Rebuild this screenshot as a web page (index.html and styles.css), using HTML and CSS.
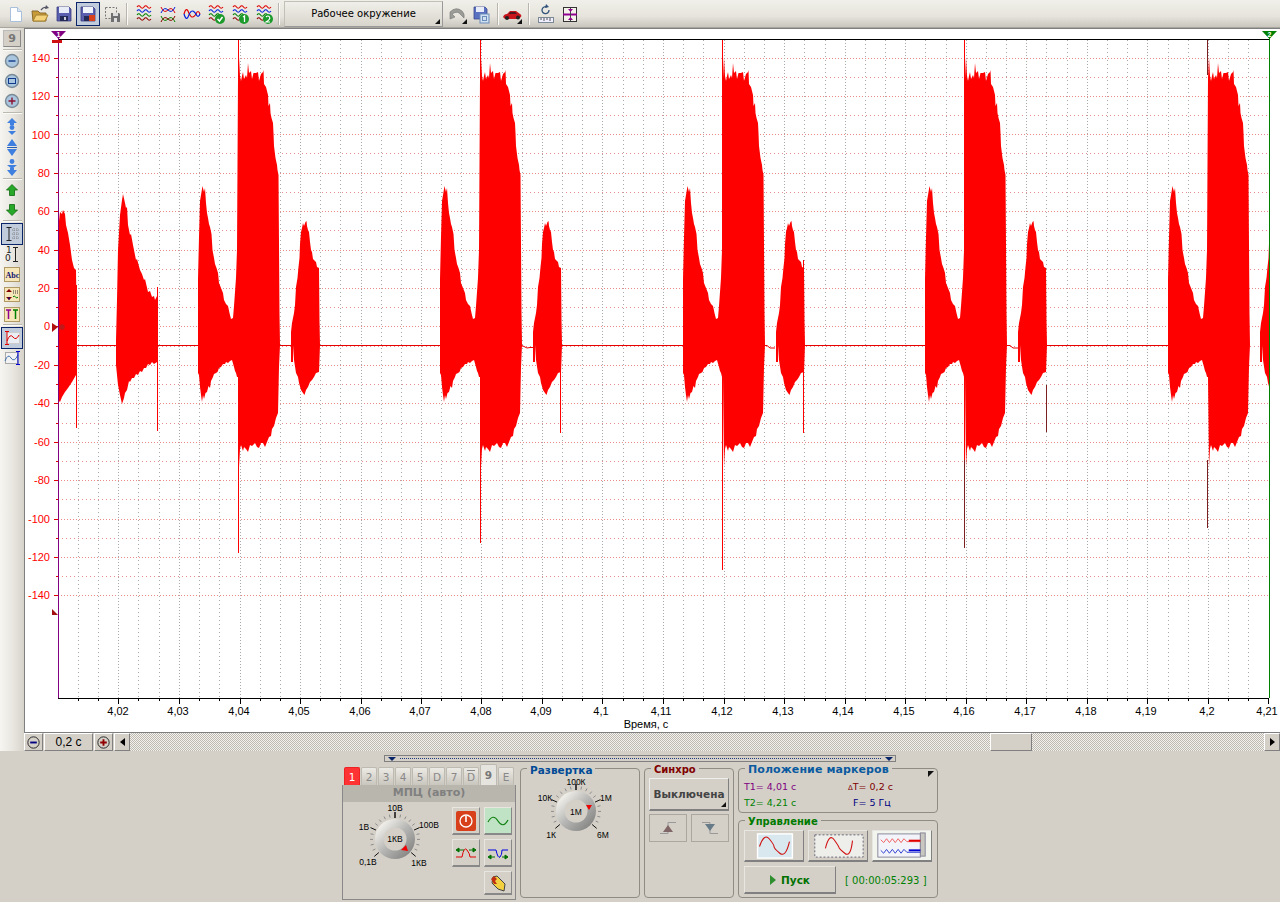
FILE: index.html
```html
<!DOCTYPE html>
<html lang="ru">
<head>
<meta charset="utf-8">
<title>Осциллограф</title>
<link rel="stylesheet" href="styles.css">
</head>
<body>
<div class="app">
  <header class="toolbar">
    <button class="tb"><svg viewBox="0 0 24 24"><path d="M6.500 5.500h7l4 4v10h-11z" fill="#fff" stroke="#a9c0dc"/><path d="M13.500 5.500v4h4" fill="#dbe7f3" stroke="#a9c0dc"/></svg></button>
    <button class="tb"><svg viewBox="0 0 24 24"><path d="M4 9h6l2 2h6v8H5z" fill="#c79a3a" stroke="#8a6a2a"/><path d="M5 19l3-6h12l-3 6z" fill="#f3d27a" stroke="#a5812f"/><path d="M13 8q3-4 6-2" fill="none" stroke="#556" stroke-width="1.300"/><path d="M18 3l3 3-4 1z" fill="#556"/></svg></button>
    <button class="tb"><svg viewBox="0 0 24 24"><path d="M5 5h12l2 2v12H5z" fill="#5a5fb0" stroke="#3a3d80" stroke-width=".8"/><rect x="7" y="5" width="10" height="6" fill="#e8ecf8"/><rect x="8" y="14" width="8" height="5" fill="#222a55"/><rect x="12" y="15" width="2" height="3" fill="#ccd"/></svg></button>
    <button class="tb active"><svg viewBox="0 0 24 24"><path d="M5 5h12l2 2v12H5z" fill="#5a5fb0" stroke="#3a3d80" stroke-width=".8"/><rect x="7" y="5" width="10" height="6" fill="#f2f4fc"/><rect x="8" y="14" width="6" height="5" fill="#222a55"/><rect x="13" y="13" width="6" height="6" fill="#d8401c"/></svg></button>
    <button class="tb"><svg viewBox="0 0 24 24"><rect x="5.500" y="5.500" width="11" height="11" fill="none" stroke="#777" stroke-dasharray="2 1.500"/><path d="M11 11h8l1 1v8H11z" fill="#6f6f6f"/><rect x="13" y="11" width="5" height="3" fill="#ddd"/><rect x="14" y="16" width="3" height="4" fill="#ddd"/></svg></button>
    <span class="tsep first"></span>
    <button class="tb"><svg viewBox="0 0 24 24"><use href="#w1" y="0" stroke="#e00000"/><use href="#w1" y="4" stroke="#0020e0"/><use href="#w1" y="8" stroke="#008000"/><use href="#w1" y="12" stroke="#900000"/></svg></button>
    <button class="tb"><svg viewBox="0 0 24 24"><path d="M5 5q3 7 7 3t7 3" fill="none" stroke="#e00000"/><path d="M5 11q3-7 7-3t7-3" fill="none" stroke="#0020e0"/><path d="M5 14q3 7 7 3t7 3" fill="none" stroke="#008000"/><path d="M5 20q3-7 7-3t7-3" fill="none" stroke="#900000"/></svg></button>
    <button class="tb"><svg viewBox="0 0 24 24"><path d="M4 12q2-7 4-3c2 5 4 9 8 3q2-5 4 0" fill="none" stroke="#e00000" stroke-width="1.200"/><path d="M4 12q2 7 4 3c2-5 4-9 8-3q2 5 4 0" fill="none" stroke="#0020e0" stroke-width="1.200"/></svg></button>
    <button class="tb"><svg viewBox="0 0 24 24"><use href="#w1" y="0" stroke="#e00000"/><use href="#w1" y="4" stroke="#0020e0"/><use href="#w1" y="8" stroke="#008000"/><use href="#w1" y="12" stroke="#900000"/><circle cx="16" cy="17" r="5" fill="#1c9a2c"/><path d="M13.500 17l2 2 3-4" fill="none" stroke="#fff" stroke-width="1.500"/></svg></button>
    <button class="tb"><svg viewBox="0 0 24 24"><use href="#w1" y="0" stroke="#e00000"/><use href="#w1" y="4" stroke="#0020e0"/><use href="#w1" y="8" stroke="#008000"/><use href="#w1" y="12" stroke="#900000"/><circle cx="16" cy="17" r="5" fill="#1c9a2c"/><path d="M15 15l1.500-1v6" fill="none" stroke="#fff" stroke-width="1.300"/></svg></button>
    <button class="tb"><svg viewBox="0 0 24 24"><use href="#w1" y="0" stroke="#e00000"/><use href="#w1" y="4" stroke="#0020e0"/><use href="#w1" y="8" stroke="#008000"/><use href="#w1" y="12" stroke="#900000"/><circle cx="16" cy="17" r="5" fill="#1c9a2c"/><path d="M14 15q2-2 3.500 0t-3.500 5h4" fill="none" stroke="#fff" stroke-width="1.200"/></svg></button>
    <span class="tsep"></span>
    <button class="env">Рабочее окружение<i class="corner"></i></button>
    <button class="tb wide"><svg viewBox="0 0 24 24"><path d="M5 17V10q6-6 12-1 3 3 2 7l-3-3q-3-5-9-1l3 3z" fill="#9c9c98" stroke="#74746f" stroke-width=".6"/></svg><i class="corner"></i></button>
    <button class="tb narrow"><svg viewBox="0 0 24 24"><path d="M5 5h11l2 2v10H5z" fill="#5a70c0" stroke="#3a4a90" stroke-width=".8"/><rect x="7" y="5" width="8" height="5" fill="#e8ecf8"/><rect x="11" y="12" width="9" height="9" fill="#cfe0f2" stroke="#6b8bb8"/><rect x="13.500" y="14.500" width="4" height="4" fill="none" stroke="#6b8bb8"/></svg></button>
    <span class="tsep s2"></span>
    <button class="tb"><svg viewBox="0 0 24 24"><path d="M3 15q1-3 4-3l3-3h6l4 3q2 1 1 3l-3 2H5z" fill="#c8161c"/><path d="M10 10h5l2 2h-8z" fill="#4a1a20"/><circle cx="7" cy="16" r="2" fill="#222"/><circle cx="18" cy="15.500" r="2" fill="#222"/></svg><i class="corner"></i></button>
    <span class="tsep s3"></span>
    <button class="tb small"><svg viewBox="0 0 22 22"><rect x="3.500" y="14.500" width="15" height="5" fill="#eef" stroke="#7c8894"/><path d="M6 15v2M9 15v3M12 15v2M15 15v3" stroke="#555"/><path d="M14 7a3.500 3.500 0 1 1-2-3" fill="none" stroke="#30527a" stroke-width="1.300"/><path d="M11 1l3 3-4 1z" fill="#30527a"/></svg></button>
    <button class="tb small"><svg viewBox="0 0 22 22"><rect x="4.500" y="4.500" width="13" height="14" fill="#f4f2ea" stroke="#333"/><path d="M4 11.500h14" stroke="#900090" stroke-width="2"/><path d="M11.500 5v13" stroke="#444"/><path d="M9 6h5l-2.500 3zM9 17h5l-2.500-3z" fill="#900090"/></svg></button>
  </header>

  <div class="work">
    <aside class="side">
      <button class="nine">9</button>
      <span class="ssep"></span>
      <button class="sb"><svg viewBox="0 0 20 20"><circle cx="10" cy="10" r="6.500" fill="#a9c6de" stroke="#7a8b98" stroke-width="1.400"/><path d="M6.500 10h7" stroke="#123a8c" stroke-width="1.400"/></svg></button>
      <button class="sb"><svg viewBox="0 0 20 20"><circle cx="10" cy="10" r="6.500" fill="#a9c6de" stroke="#7a8b98" stroke-width="1.400"/><rect x="6.500" y="7.500" width="7" height="5" fill="none" stroke="#123a8c"/></svg></button>
      <button class="sb"><svg viewBox="0 0 20 20"><circle cx="10" cy="10" r="6.500" fill="#a9c6de" stroke="#7a8b98" stroke-width="1.400"/><path d="M6.500 10h7M10 6.500v7" stroke="#8c1230" stroke-width="1.400"/></svg></button>
      <span class="ssep tight"></span>
      <button class="sb tall"><svg viewBox="0 0 20 20"><path d="M10 2l5 5h-3v2H8V7H5z" fill="#3f7fe0"/><circle cx="10" cy="11.500" r="2.400" fill="#3f7fe0"/><path d="M6 15h8l-4 4z" fill="#3f7fe0"/></svg></button>
      <button class="sb tall"><svg viewBox="0 0 20 20"><path d="M10 2l5 7H5zM10 19l-5-7h10z" fill="#3f7fe0"/><path d="M5 10.500h10" stroke="#2a5cb0"/></svg></button>
      <button class="sb tall"><svg viewBox="0 0 20 20"><circle cx="10" cy="3.500" r="2.400" fill="#3f7fe0"/><path d="M5 7h10l-5 4zM5 12h3v-2h4v2h3l-5 6z" fill="#3f7fe0"/></svg></button>
      <span class="ssep flat"></span>
      <button class="sb"><svg viewBox="0 0 20 20"><path d="M10 4.500l5.500 5.500h-3v5.500h-5V10h-3z" fill="#28a828" stroke="#106a10" stroke-width=".8"/></svg></button>
      <button class="sb"><svg viewBox="0 0 20 20"><path d="M10 15.500l5.500-5.500h-3V4.500h-5V10h-3z" fill="#28a828" stroke="#106a10" stroke-width=".8"/></svg></button>
      <span class="ssep flat low"></span>
      <button class="sb on"><svg viewBox="0 0 20 20"><path d="M4.500 3.500h5M7 3.500v13M4.500 16.500h5" fill="none" stroke="#222"/><path d="M10 6h7M10 10h7M10 14h7M12 4v12M15 4v12" stroke="#888" stroke-dasharray="1 1"/></svg></button>
      <button class="sb"><svg viewBox="0 0 20 20"><text x="4" y="9" class="ico-t">1</text><text x="3" y="17" class="ico-t">0</text><path d="M11 3.500h5M13.500 3.500v14M11 17.500h5" fill="none" stroke="#222"/></svg></button>
      <button class="sb"><svg viewBox="0 0 20 20"><rect x="2.500" y="3.500" width="15" height="14" fill="#f6e6b8" stroke="#b09a66"/><text x="3.500" y="14" class="ico-b">Abc</text></svg></button>
      <button class="sb"><svg viewBox="0 0 20 20"><rect x="2.500" y="3.500" width="15" height="14" fill="#f6e6b8" stroke="#b09a66"/><path d="M7 5l3 3H4zM7 16l-3-3h6z" fill="#800000"/><path d="M6 13.500l1 3 1-3z" fill="#000080"/><path d="M11 7h5M11 9h5" stroke="#333" stroke-dasharray="1 1"/><path d="M11 13q1-2 2.500 0t2.500 0" stroke="#008000" fill="none"/></svg></button>
      <button class="sb"><svg viewBox="0 0 20 20"><rect x="2.500" y="3.500" width="15" height="14" fill="#f6e6b8" stroke="#b09a66"/><path d="M4 6h5M6.500 6v9" stroke="#900090" stroke-width="1.500"/><path d="M11 6h5M13.500 6v9" stroke="#008000" stroke-width="1.500"/></svg></button>
      <span class="ssep flat gap"></span>
      <button class="sb on"><svg viewBox="0 0 20 20"><rect x="4.500" y="4.500" width="13" height="11" fill="#e8eef4" stroke="#ccc"/><path d="M3 3.500h4M5 3.500v13M3 16.500h4" fill="none" stroke="#e00000"/><path d="M5 13q3-8 6-4t6-2" fill="none" stroke="#e00000"/></svg></button>
      <button class="sb"><svg viewBox="0 0 20 20"><rect x="3.500" y="4.500" width="12" height="11" fill="#f2f2f2" stroke="#aaa"/><path d="M3 13q3-8 6-3t7-3" fill="none" stroke="#4070b0"/><path d="M14 3.500h4M16 3.500v13M14 16.500h4" fill="none" stroke="#0000d0"/></svg></button>
    </aside>

    <main class="main">
      <div class="chart">
        <svg class="plot" viewBox="25 29 1255 703" width="1255" height="703">
          <defs>
            <path id="w1" d="M5 5q1.750-2.500 3.500 0t3.500 0 3.500 0 3.500 0" fill="none" stroke-width="1.100"/>
            <clipPath id="clip-plot"><rect x="58" y="30" width="1211" height="668"/></clipPath>
            <path id="main-burst" d="M440 345V279L441 237 442 201 443.500 192 444.500 186 446 192 447 188 448 203 449 213 450 218 451 224 452 227 453.500 234 454.500 250 456 258 457 264 458.500 268 460 273 461 283 463 288 465 293 466 300 468 304 470 306 471.500 313 473 319 475 318 476 306 477 292 478 278 479 250 480 78 481 57 482 76 483 81 484 76 485 72 486 79 487 77 488 75 489 78 490 63 491 73 493 71 494 79 495.500 73 498 73 500 72 501 81 503 74 505 72 505.500 70 506 84 508 87 509 91 510 95 510.500 106 512 103 512.500 113 513.500 118 515 123 515.500 133 516 146 517.500 158 519 165 519.500 170 520.500 175 521.500 314 522 345 521 367 520 413 518 418 516 426 514 429 513 436 511 437 509 442 507 447 505 443 503 443 501 448 499 447 497 443 494 446 492 445 490 452 488 449 486 447 485 451 483 445 482 449 481 467 480 377 479 377 478 373 477 371 476 367 474 360 472 361 470 363 468 362 467 364 465 364 463 367 461 368 459.500 372 458 373 456 374 455 377 453 381 452 388 450.500 386 449 392 447.500 393 446 399 445 395 444 402 443 395 442 387 441 375 440 373z"/>
            <path id="small-burst" d="M533 345V332L534 323 536 313 537 305 538 287 539.500 278 540.500 267 541.500 258 542 244 543 232 544 228 545 223 546 226 547.500 222 548.500 221 549 226 550 230 551 232 552 242 553 250 554 252 555 259 558 262 559 267 561 268 561.500 321 562 345 561 372 558 373 556 377 554 380 552 382 550 387 548 390 546.500 395 545 393 543 390 541 383 540 377 538 373 536 360 535 345 535 362 533 362z"/>
          </defs>
          <path class="grid-y" d="M58 58.500H1269M58 96.500H1269M58 134.500H1269M58 173.500H1269M58 211.500H1269M58 250.500H1269M58 288.500H1269M58 326.500H1269M58 365.500H1269M58 403.500H1269M58 442.500H1269M58 480.500H1269M58 519.500H1269M58 557.500H1269M58 595.500H1269"/>
          <path class="grid-y minor" d="M58 77.500H1269M58 115.500H1269M58 153.500H1269M58 192.500H1269M58 230.500H1269M58 269.500H1269M58 307.500H1269M58 346.500H1269M58 384.500H1269M58 423.500H1269M58 461.500H1269M58 499.500H1269M58 538.500H1269M58 576.500H1269"/>
          <path class="grid-x" d="M118.500 40V698M179.500 40V698M240.500 40V698M300.500 40V698M361.500 40V698M421.500 40V698M481.500 40V698M542.500 40V698M602.500 40V698M663.500 40V698M724.500 40V698M784.500 40V698M845.500 40V698M905.500 40V698M966.500 40V698M1026.500 40V698M1087.500 40V698M1147.500 40V698M1208.500 40V698"/>
          <path class="grid-x minor" d="M78.500 40V698M98.500 40V698M138.500 40V698M159.500 40V698M199.500 40V698M219.500 40V698M260.500 40V698M280.500 40V698M320.500 40V698M340.500 40V698M381.500 40V698M401.500 40V698M441.500 40V698M461.500 40V698M502.500 40V698M522.500 40V698M562.500 40V698M582.500 40V698M623.500 40V698M643.500 40V698M683.500 40V698M703.500 40V698M744.500 40V698M764.500 40V698M804.500 40V698M825.500 40V698M865.500 40V698M885.500 40V698M925.500 40V698M946.500 40V698M986.500 40V698M1006.500 40V698M1046.500 40V698M1067.500 40V698M1107.500 40V698M1127.500 40V698M1168.500 40V698M1188.500 40V698M1228.500 40V698M1248.500 40V698"/>
          <g clip-path="url(#clip-plot)" class="sig">
            <path class="base" d="M58 345.500H522L524 346.500 527 348 530 347.500H533M562 345.500H683M765 345.500H767L770 348H775M805 345.500H925M1007 345.500H1010L1013 348H1018M1047 345.500H1168"/>
            <path d="M58 400V221L59 221 60 212 62 214 63 210 65 214 66 225 68 233 70 245 72 260 74 268 76 270 77 345 76 375 72 382 68 388 65 392 62 397 60 402z"/>
            <path d="M116 345V340L117 300 118 250 120 215 122 200 123 194 125 203 126 208 127 207 128 225 130 235 131 234 133 245 134 250 136 260 137 259 140 270 142 274 144 280 145 279 148 292 150 291 152 297 154 296 155 300 157 296 158 305V345L157 362 154 364 152 362 150 365 148 364 146 368 144 368 142 372 140 371 138 375 136 374 134 378 132 378 130 382 129 381 127 390 125 393 124 398 122 404 120 395 118 385 116 365z"/>
            <use href="#main-burst" x="-242"/><use href="#main-burst"/><use href="#main-burst" x="243"/><use href="#main-burst" x="485"/><use href="#main-burst" x="728"/>
            <use href="#small-burst" x="-242"/><use href="#small-burst"/><use href="#small-burst" x="243"/><use href="#small-burst" x="485"/><use href="#small-burst" x="727"/>
            <path class="spike" d="M76.500 285V428M157.500 287V431M238.500 40V553M480.500 40V543M560.500 340V433M722.500 40V570M803.500 260V433M964.500 40V460"/>
            <path class="spike dark" d="M964.500 460V548M1046.500 385V432M1207.500 40V75M1207.500 460V528"/>
          </g>
          <path class="axis-b" d="M58 39.500H1269M58 698.500H1269M118.500 698V704M179.500 698V704M240.500 698V704M300.500 698V704M361.500 698V704M421.500 698V704M481.500 698V704M542.500 698V704M602.500 698V704M663.500 698V704M724.500 698V704M784.500 698V704M845.500 698V704M905.500 698V704M966.500 698V704M1026.500 698V704M1087.500 698V704M1147.500 698V704M1208.500 698V704M1268.500 698V704M78.500 698V701M98.500 698V701M138.500 698V701M159.500 698V701M199.500 698V701M219.500 698V701M260.500 698V701M280.500 698V701M320.500 698V701M340.500 698V701M381.500 698V701M401.500 698V701M441.500 698V701M461.500 698V701M502.500 698V701M522.500 698V701M562.500 698V701M582.500 698V701M623.500 698V701M643.500 698V701M683.500 698V701M703.500 698V701M744.500 698V701M764.500 698V701M804.500 698V701M825.500 698V701M865.500 698V701M885.500 698V701M925.500 698V701M946.500 698V701M986.500 698V701M1006.500 698V701M1046.500 698V701M1067.500 698V701M1107.500 698V701M1127.500 698V701M1168.500 698V701M1188.500 698V701M1228.500 698V701M1248.500 698V701"/>
          <path class="axis-r" d="M54 58.500H58M54 96.500H58M54 134.500H58M54 173.500H58M54 211.500H58M54 250.500H58M54 288.500H58M54 326.500H58M54 365.500H58M54 403.500H58M54 442.500H58M54 480.500H58M54 519.500H58M54 557.500H58M54 595.500H58M56 77.500H58M56 115.500H58M56 153.500H58M56 192.500H58M56 230.500H58M56 269.500H58M56 307.500H58M56 346.500H58M56 384.500H58M56 423.500H58M56 461.500H58M56 499.500H58M56 538.500H58M56 576.500H58"/>
          <path class="mk1" d="M58.500 37V698"/>
          <path class="mk2" d="M1269.500 37V698"/>
          <path d="M51 31H66L58.500 39z" fill="#800080"/><path d="M1262 31H1277L1269.500 39z" fill="#008000"/>
          <path d="M52 40h10v3H52z" fill="#d01010"/>
          <path d="M52 323l6 4-6 5z" fill="#b01010"/><circle cx="62" cy="327" r="2.800" fill="#c01818"/>
          <path d="M52 609l6 6h-6z" fill="#a01010"/>
          <text x="58.500" y="37" class="mk-n">1</text><text x="1269.500" y="37" class="mk-n">2</text>
          <g class="yl">
            <text x="50" y="62">140</text><text x="50" y="100">120</text><text x="50" y="139">100</text><text x="50" y="177">80</text><text x="50" y="215">60</text><text x="50" y="254">40</text><text x="50" y="292">20</text><text x="50" y="330">0</text><text x="50" y="369">-20</text><text x="50" y="407">-40</text><text x="50" y="446">-60</text><text x="50" y="484">-80</text><text x="50" y="523">-100</text><text x="50" y="561">-120</text><text x="50" y="599">-140</text>
          </g>
          <g class="xl">
            <text x="118" y="715">4,02</text><text x="178" y="715">4,03</text><text x="239" y="715">4,04</text><text x="299" y="715">4,05</text><text x="360" y="715">4,06</text><text x="420" y="715">4,07</text><text x="481" y="715">4,08</text><text x="541" y="715">4,09</text><text x="601" y="715">4,1</text><text x="661" y="715">4,11</text><text x="722" y="715">4,12</text><text x="783" y="715">4,13</text><text x="843" y="715">4,14</text><text x="904" y="715">4,15</text><text x="964" y="715">4,16</text><text x="1025" y="715">4,17</text><text x="1086" y="715">4,18</text><text x="1146" y="715">4,19</text><text x="1207" y="715">4,2</text><text x="1267" y="715">4,21</text>
            <text x="646" y="728">Время, с</text>
          </g>
        </svg>
      </div>
      <div class="scroll">
        <button class="sc"><svg viewBox="0 0 18 18"><circle cx="9" cy="9" r="6" fill="none" stroke="#222"/><path d="M5.500 9h7" stroke="#000080" stroke-width="2"/></svg></button>
        <button class="sc val">0,2 с</button>
        <button class="sc"><svg viewBox="0 0 18 18"><circle cx="9" cy="9" r="6" fill="none" stroke="#222"/><path d="M5.500 9h7M9 5.500v7" stroke="#900000" stroke-width="2"/></svg></button>
        <button class="sc arr"><i class="tri-l"></i></button>
        <div class="track"><span class="thumb"></span></div>
        <button class="sc arr"><i class="tri-r"></i></button>
      </div>
    </main>
  </div>

  <footer class="bottom">
    <div class="splitter"><i class="tri-d"></i><span class="dots"></span><i class="tri-d"></i></div>
    <div class="panels">
      <section class="channel">
        <div class="tabs">
          <span class="tab act">1</span><span class="tab">2</span><span class="tab">3</span><span class="tab">4</span><span class="tab">5</span><span class="tab">D</span><span class="tab">7</span><span class="tab over">D</span><span class="tab nine-t">9</span><span class="tab">E</span>
        </div>
        <div class="chan-head">МПЦ (авто)</div>
        <div class="chan-body">
          <svg class="knob1" viewBox="344 803 106 70" width="106" height="70">
            <defs>
              <linearGradient id="ring" x1="0" y1="0" x2="1" y2="1"><stop offset=".15" stop-color="#f0efea"/><stop offset=".5" stop-color="#b6b6b4"/><stop offset="1" stop-color="#767674"/></linearGradient>
              <g id="ticks">
                <path d="M4.900-21.400L5.600-24.400M9.600-19.800L11-22.500M13.800-17.100L15.700-19.400M17.300-13.500L19.700-15.400M21.500-4.600L24.500-5.200M22 .4L25 .4M21.300 5.300L24.300 6M19.600 10L22.300 11.300" stroke="#8c8c8c"/>
                <path d="M0-21V-27M19-8.900L24.500-11.400M16.100 13.500L20.700 17.400" stroke="#111"/>
              </g>
              <g id="knob">
                <use href="#ticks"/><use href="#ticks" transform="scale(-1 1)"/>
                <circle r="20" fill="url(#ring)"/><circle r="11.500" fill="#d4d0c8"/>
              </g>
            </defs>
            <use href="#knob" transform="translate(396 839)"/>
            <path d="M402 850l5-5 2 6z" fill="#f00000"/>
            <g class="kl">
              <text x="396" y="811">10В</text><text x="365" y="830">1В</text><text x="430" y="828">100В</text><text x="369" y="865">0,1В</text><text x="420" y="866">1КВ</text><text x="396" y="842">1КВ</text>
            </g>
          </svg>
          <div class="chan-btns">
            <button class="cb"><svg viewBox="0 0 26 26"><rect x="3" y="3" width="20" height="20" rx="2" fill="#d8401c"/><circle cx="13" cy="13" r="6" fill="none" stroke="#fff" stroke-width="1.300"/><path d="M13 8v6" stroke="#fff" stroke-width="1.600"/></svg></button>
            <button class="cb green"><svg viewBox="0 0 26 26"><path d="M3 14q5-9 10-1t10-1" fill="none" stroke="#108010" stroke-width="1.200"/></svg></button>
            <button class="cb"><svg viewBox="0 0 26 26"><path d="M3 17h6q2-11 5-7t3 7h6" fill="none" stroke="#e00000"/><path d="M3 10l3-2v4zM11 10H5M23 10l-3-2v4zM21 10h-5" fill="#007000" stroke="#007000"/></svg></button>
            <button class="cb"><svg viewBox="0 0 26 26"><path d="M3 10h8q2 9 4 7t2-7h6" fill="none" stroke="#0000e0"/><path d="M3 17l3-2v4zM10 17H5M23 17l-3-2v4zM21 17h-4" fill="#007000" stroke="#007000"/></svg></button>
            <button class="cb short slot2"><svg viewBox="0 0 26 22"><path d="M8 5l4-1 8 8-1 7-6-2-6-6z" fill="#f2d040" stroke="#444"/><path d="M6 7l3-3 3 3-2 2 2 3-3 0z" fill="#c03010"/></svg></button>
          </div>
        </div>
      </section>

      <fieldset class="grp sweep">
        <legend class="lg blue">Развертка</legend>
        <svg class="knob2" viewBox="521 775 118 68" width="118" height="68">
          <use href="#knob" transform="translate(576 811)"/>
          <path d="M586 805h6l-3 5z" fill="#f00000"/>
          <g class="kl">
            <text x="576" y="785">100К</text><text x="545" y="801">10К</text><text x="606" y="801">1М</text><text x="551" y="838">1К</text><text x="603" y="838">6М</text><text x="576" y="815">1М</text>
          </g>
        </svg>
      </fieldset>

      <fieldset class="grp sync">
        <legend class="lg maroon">Синхро</legend>
        <button class="off">Выключена<i class="corner"></i></button>
        <div class="sync-row">
          <button class="edge"><svg viewBox="0 0 24 20"><path d="M4 15.500h8V4.500h8" fill="none" stroke="#999"/><path d="M7 14l5-7 5 7z" fill="#806666"/></svg></button>
          <button class="edge"><svg viewBox="0 0 24 20"><path d="M4 4.500h8V15.500h8" fill="none" stroke="#999"/><path d="M7 6l5 7 5-7z" fill="#667a88"/></svg></button>
        </div>
      </fieldset>

      <div class="rcol">
        <fieldset class="grp marks">
          <legend class="lg steel">Положение маркеров</legend>
          <i class="corner top"></i>
          <div class="mrow"><span class="c-pur">T1= 4,01 с</span><span class="c-red dt"><small>Δ</small>T= 0,2 с</span></div>
          <div class="mrow"><span class="c-grn">T2= 4,21 с</span><span class="c-nav f">F= 5 Гц</span></div>
        </fieldset>
        <fieldset class="grp ctrl">
          <legend class="lg green-t">Управление</legend>
          <div class="modes">
            <button class="mode"><svg viewBox="0 0 58 30"><rect x="12" y="3" width="36" height="25" fill="#d8e8ee" stroke="#fff" stroke-width="1.500"/><path d="M14 16q5-14 10-8t5 8 6 7 10-12" fill="none" stroke="#d01010" stroke-width="1.100"/></svg></button>
            <button class="mode"><svg viewBox="0 0 58 30"><rect x="5" y="4" width="50" height="23" fill="#eeeeea" stroke="#667" stroke-dasharray="2 2"/><path d="M16 18q4-16 9-9t5 8 6 6 8-13" fill="none" stroke="#d01010" stroke-width="1.100"/></svg></button>
            <button class="mode lit"><svg viewBox="0 0 58 30"><rect x="4" y="3" width="44" height="24" fill="#f2f4fa" stroke="#889"/><rect x="48" y="2" width="5" height="24" fill="#c8c8c0" stroke="#889"/><path d="M7 9l3 3 3-4 3 4 3-4 3 4 3-4 3 4 3-4 3 3h14" fill="none" stroke="#f06060"/><path d="M36 10h12" stroke="#e00000" stroke-width="2"/><path d="M7 20l3 3 3-4 3 4 3-4 3 4 3-4 3 4 3-4 3 3h14" fill="none" stroke="#3040d0"/><path d="M36 20h12" stroke="#0000d0" stroke-width="2"/></svg></button>
          </div>
          <div class="runrow">
            <button class="run"><i class="tri-g"></i>Пуск</button>
            <span class="timer">[ 00:00:05:293 ]</span>
          </div>
        </fieldset>
      </div>
    </div>
  </footer>
</div>
</body>
</html>
```
FILE: styles.css
```css
* { box-sizing: border-box; }
html, body { margin: 0; height: 100%; background: #d4d0c8; }
body { font-family: "DejaVu Sans", "Liberation Sans", sans-serif; font-size: 11px; color: #000; overflow: hidden; }
button { font: inherit; padding: 0; margin: 0; background: transparent; border: 0; color: inherit; position: relative; }
svg { display: block; }

.app { width: 1280px; height: 902px; display: flex; flex-direction: column; }

/* top toolbar */
.toolbar { height: 28px; flex: none; padding-left: 4px; display: flex; align-items: center; background: linear-gradient(#f0efe9, #e6e4dc 60%, #c9c6be); border-bottom: 1px solid #a8a59e; }
.tb { width: 24px; height: 24px; flex: none; }
.tb svg { width: 24px; height: 24px; }
.tb.active { background: #c0cbdc; outline: 1px solid #0a246a; outline-offset: -1px; }
.tb.wide { margin-left: 2px; }
.tb.small { width: 22px; margin-right: 2px; }
.tb.small svg { width: 22px; height: 22px; margin: 1px 0; }
.tsep { width: 2px; height: 22px; margin: 0 3px 0 2px; background: #fbfaf6; border-left: 1px solid #b8b5ae; flex: none; }
.tsep.first { margin-right: 4px; }
.tsep.s2 { margin: 0 1px 0 4px; }
.tsep.s3 { margin: 0 5px 0 4px; }
.env { width: 159px; height: 26px; margin-left: 1px; margin-right: 0; flex: none; text-align: center; font-size: 10px; background: linear-gradient(#f0efe9, #d8d5cc); border: 1px solid #c2bfb7; border-right-color: #999; border-bottom-color: #999; }
.corner { position: absolute; right: 2px; bottom: 2px; width: 0; height: 0; border-left: 5px solid transparent; border-bottom: 5px solid #111; }
.corner.top { right: 3px; top: -1px; bottom: auto; border-left: 0; border-bottom: 0; border-right: 6px solid transparent; border-top: 6px solid #111; }

/* work area */
.work { flex: none; height: 723px; display: flex; }
.side { width: 24px; flex: none; padding-top: 1px; display: flex; flex-direction: column; align-items: center; background: linear-gradient(90deg, #f6f5f1, #e8e6df 55%, #d6d3cb); }
.nine { width: 18px; height: 17px; flex: none; margin-top: 1px; font-weight: bold; font-size: 11px; color: #777; text-align: center; background: #d4d0c8; border: 1px solid #888; border-top-color: #bbb; border-left-color: #bbb; }
.ssep { width: 19px; height: 2px; flex: none; margin-top: 2px; background: #fafaf6; border-top: 1px solid #bbb8b0; }
.ssep.tight { margin: 1px 0; }
.ssep.flat { margin: 0; }
.ssep.low { margin-bottom: 2px; }
.ssep.gap { margin-bottom: 2px; }
.sb { width: 20px; height: 20px; flex: none; }
.sb svg { width: 20px; height: 20px; }
.sb.tall { height: 21px; }
.sb.on { background: #c0cbdc; outline: 1px solid #0a246a; }
.ico-t { font: 9px "DejaVu Sans", sans-serif; fill: #222; }
.ico-b { font: bold 8px "Liberation Serif", serif; fill: #101070; }

.main { flex: 1; min-width: 0; display: flex; flex-direction: column; }
.chart { height: 705px; flex: none; background: #fff; border-top: 1px solid #7f7f7f; border-left: 1px solid #7f7f7f; border-bottom: 1px solid #7f7f7f; }
.plot { overflow: hidden; }
.grid-y { fill: none; stroke: #ea8a8a; stroke-dasharray: 1 2; stroke-width: 1; }
.grid-y.minor { stroke-dasharray: 1 3; }
.grid-x { fill: none; stroke: #a8a8a8; stroke-dasharray: 1 2; stroke-width: 1; }
.grid-x.minor { stroke-dasharray: 1 3; }
.sig { fill: #ff0000; }
.base { fill: none; stroke: #e60000; stroke-width: 1; }
.spike { fill: none; stroke: #ff0000; stroke-width: 1; }
.spike.dark { stroke: #7a2020; }
.axis-b { fill: none; stroke: #000; stroke-width: 1; }
.axis-r { fill: none; stroke: #e00000; stroke-width: 1; }
.mk1 { stroke: #800080; stroke-width: 1; }
.mk2 { stroke: #008000; stroke-width: 1; }
.mk-n { font: bold 7px "Liberation Sans", sans-serif; fill: #fff; text-anchor: middle; }
.yl { font: 11px "Liberation Sans", sans-serif; fill: #f00; text-anchor: end; }
.xl { font: 11px "Liberation Sans", sans-serif; fill: #000; text-anchor: middle; }

.scroll { height: 18px; flex: none; display: flex; background: #d4d0c8; }
.sc { width: 19px; height: 18px; flex: none; margin-right: 1px; background: #d4d0c8; border: 1px solid #fff; border-right-color: #808080; border-bottom-color: #808080; display: flex; align-items: center; justify-content: center; }
.sc svg { width: 17px; height: 17px; flex: none; }
.sc.val { width: 49px; font-family: "Liberation Sans", sans-serif; font-size: 12px; }
.sc.arr { width: 16px; margin: 0; }
.track { flex: 1; min-width: 0; padding-left: 860px; background: repeating-conic-gradient(#bdbab2 0 25%, #f2f1ed 0 50%) 0 0 / 2px 2px; }
.thumb { display: block; width: 42px; height: 18px; background: #d4d0c8; border: 1px solid #fff; border-right-color: #808080; border-bottom-color: #808080; }
.tri-l, .tri-r { width: 0; height: 0; border-top: 4px solid transparent; border-bottom: 4px solid transparent; }
.tri-l { border-right: 5px solid #000; }
.tri-r { border-left: 5px solid #000; }

/* bottom panel */
.bottom { flex: 1; min-height: 0; background: #d4d0c8; display: flex; flex-direction: column; align-items: center; }
.splitter { width: 512px; height: 7px; margin-top: 4px; flex: none; border: 1px solid #808080; display: flex; align-items: center; gap: 4px; padding: 0 2px 0 3px; }
.dots { flex: 1; border-top: 1px dotted #1f3a80; }
.tri-d { width: 0; height: 0; border-left: 4px solid transparent; border-right: 4px solid transparent; border-top: 4px solid #0a246a; }
.panels { margin-top: 2px; display: flex; gap: 4px; align-items: flex-start; }

.channel { width: 174px; height: 135px; display: flex; flex-direction: column; }
.tabs { height: 21px; flex: none; display: flex; align-items: flex-end; gap: 1px; padding-left: 2px; }
.tab { width: 16px; height: 18px; display: flex; align-items: center; justify-content: center; font-size: 10.500px; color: #888; background: linear-gradient(#eceae4, #c9c6be); border: 1px solid #bdbab2; border-bottom: 0; border-radius: 2px 2px 0 0; }
.tab.act { background: #f33; color: #fff; border-color: #e22; }
.tab.over { text-decoration: overline; }
.tab.nine-t { height: 21px; width: 17px; font-weight: bold; color: #777; background: #e6e4de; }
.chan-head { height: 17px; flex: none; text-align: center; line-height: 16px; font-weight: bold; font-size: 11px; color: #808080; background: #b9b6ad; border-left: 1px solid #888; border-right: 1px solid #888; }
.chan-body { flex: 1; display: flex; border: 1px solid #888; border-top: 0; padding-top: 1px; }
.knob1 { flex: none; }
.kl { font: 8.500px "Liberation Sans", sans-serif; fill: #000; text-anchor: middle; }
.chan-btns { padding-top: 4px; display: grid; grid-template-columns: 28px 28px; grid-auto-rows: 28px; gap: 4px; align-content: start; margin-left: 3px; }
.cb { width: 28px; height: 28px; background: #d4d0c8; border: 1px solid #e8e6e0; border-right-color: #888; border-bottom-color: #888; border-bottom-width: 2px; display: flex; align-items: center; justify-content: center; }
.cb svg { width: 26px; height: 26px; flex: none; }
.cb.green { background: #bfe3c4; }
.cb.short { height: 24px; }
.cb.short svg { height: 22px; }
.slot2 { grid-column: 2; }

.grp { margin: 0; padding: 0; border: 1px solid #8f8c85; border-radius: 4px; min-width: 0; position: relative; }
.lg { height: 8px; padding: 0 3px; margin-left: 6px; font-weight: bold; font-size: 10.500px; line-height: 12px; }
.blue { color: #004a96; }
.maroon { color: #800000; margin-left: 2px; font-size: 10px; }
.steel { color: #0a5aa0; margin-left: 1px; font-size: 11px; letter-spacing: .1px; }
.green-t { color: #007a00; margin-left: 1px; font-size: 10px; }
.sweep { width: 120px; height: 134px; }
.knob2 { margin-top: 3px; }
.sync { width: 90px; height: 134px; padding: 0 4px; display: block; }
.off { display: block; width: 80px; height: 33px; margin-top: 6px; font-weight: bold; font-size: 10.500px; color: #444; text-align: center; background: #d4d0c8; border: 1px solid #eee; border-right-color: #808080; border-bottom-color: #808080; border-bottom-width: 2px; }
.sync-row { display: flex; gap: 4px; margin-top: 3px; }
.edge { width: 38px; height: 28px; background: #d4d0c8; border: 1px solid #aaa79f; display: flex; align-items: center; justify-content: center; }
.edge svg { width: 24px; height: 20px; flex: none; }
.rcol { width: 200px; display: flex; flex-direction: column; gap: 3px; }
.marks { height: 49px; padding: 6px 0 0 5px; }
.mrow { display: flex; height: 16px; align-items: center; font-size: 9.500px; }
.mrow span:first-child { width: 104px; }
.dt small { font-size: 7px; }
.f { margin-left: 5px; }
.c-pur { color: #800080; }
.c-red { color: #800000; }
.c-grn { color: #008000; }
.c-nav { color: #000080; }
.ctrl { height: 82px; padding: 6px 5px 0; }
.modes { display: flex; gap: 4px; }
.mode { width: 60px; height: 32px; background: #d4d0c8; border: 1px solid #e8e6e0; border-right-color: #808080; border-bottom-color: #808080; border-bottom-width: 2px; }
.mode svg { width: 58px; height: 29px; }
.mode.lit { background: #f2f4ee; }
.runrow { display: flex; align-items: center; margin-top: 4px; }
.run { width: 92px; height: 28px; display: flex; align-items: center; justify-content: center; gap: 5px; font-weight: bold; font-size: 10.500px; color: #007000; background: #d4d0c8; border: 1px solid #e8e6e0; border-right-color: #808080; border-bottom-color: #808080; border-bottom-width: 2px; }
.tri-g { width: 0; height: 0; border-top: 5px solid transparent; border-bottom: 5px solid transparent; border-left: 6px solid #2f8f2f; }
.timer { margin-left: 9px; color: #008000; font-size: 10px; white-space: nowrap; }
```
